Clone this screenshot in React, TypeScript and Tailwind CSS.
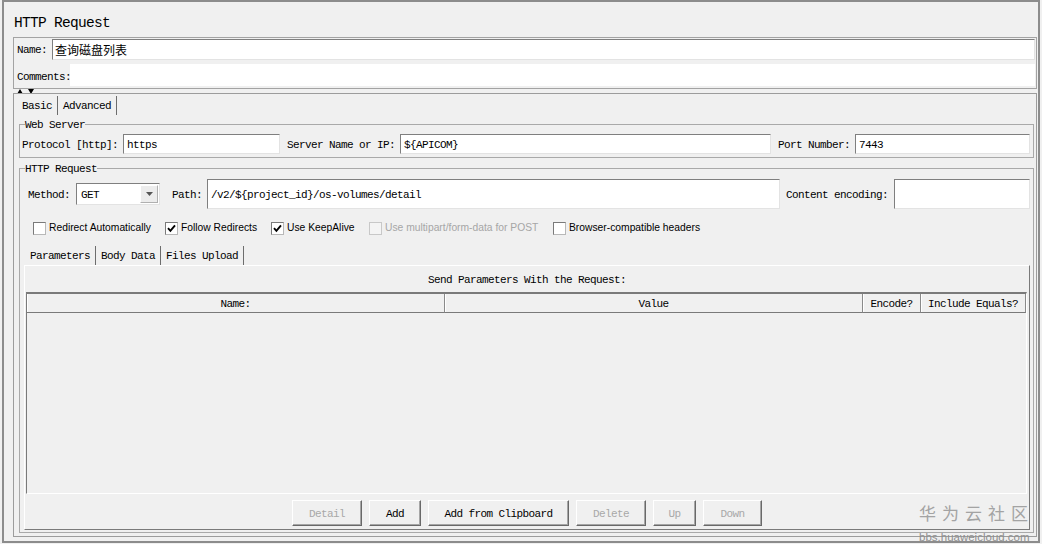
import type { ReactNode } from "react";

const mono = "font-['Liberation_Mono','Noto_Sans_CJK_SC',monospace]";
const sans = "font-['Liberation_Sans',Arial,sans-serif]";
const sunken =
  "border border-t-[#7f7f7f] border-l-[#7f7f7f] border-r-[#e3e3e3] border-b-[#e3e3e3] bg-white";

function Tab({ children, className }: { children: ReactNode; className: string }) {
  return (
    <div className={`flex h-[19px] items-center border-r border-r-[#6d6d6d] pt-[2px] ${className}`}>
      {children}
    </div>
  );
}

function Check({ checked, disabled }: { checked?: boolean; disabled?: boolean }) {
  return (
    <span
      className={
        disabled
          ? "flex h-[13px] w-[13px] shrink-0 items-center justify-center border border-[#c8c8c8] bg-[#f4f4f4]"
          : "flex h-[13px] w-[13px] shrink-0 items-center justify-center border border-t-[#7a7a7a] border-l-[#7a7a7a] border-r-[#b8b8b8] border-b-[#b8b8b8] bg-white"
      }
    >
      {checked && (
        <svg viewBox="0 0 9 9" className="h-[9px] w-[9px]">
          <path d="M1 4.2 L3.4 6.8 L8 1.4" stroke="#000" strokeWidth="1.9" fill="none" />
        </svg>
      )}
    </span>
  );
}

function Button({ label, width, disabled }: { label: string; width: string; disabled?: boolean }) {
  return (
    <div
      className={`flex h-[26px] ${width} items-center justify-center border border-t-white border-l-white border-r-[#696969] border-b-[#696969] pt-[2px] shadow-[inset_-1px_-1px_0_#a6a6a6] ${
        disabled ? "text-[#a8a8a8]" : "text-black"
      }`}
    >
      {label}
    </div>
  );
}

// label next to a field, nudged down so the glyphs sit on the field's centre line
function Label({ children, className }: { children: ReactNode; className: string }) {
  return <span className={`shrink-0 pt-[2px] ${className}`}>{children}</span>;
}

const options = [
  { label: "Redirect Automatically", checked: false, disabled: false, width: "w-[132px]" },
  { label: "Follow Redirects", checked: true, disabled: false, width: "w-[106px]" },
  { label: "Use KeepAlive", checked: true, disabled: false, width: "w-[98px]" },
  { label: "Use multipart/form-data for POST", checked: false, disabled: true, width: "w-[184px]" },
  { label: "Browser-compatible headers", checked: false, disabled: false, width: "w-[170px]" },
];

const columns = ["Name:", "Value", "Encode?", "Include Equals?"];

const buttons = [
  { label: "Detail", width: "w-[70px]", disabled: true },
  { label: "Add", width: "w-[52px]", disabled: false },
  { label: "Add from Clipboard", width: "w-[141px]", disabled: false },
  { label: "Delete", width: "w-[70px]", disabled: true },
  { label: "Up", width: "w-[43px]", disabled: true },
  { label: "Down", width: "w-[59px]", disabled: true },
];

export default function App() {
  return (
    <div
      className={`relative h-[544px] w-[1042px] overflow-hidden bg-[#f0f0f0] pl-[2px] text-black ${mono} text-[11px] tracking-[-0.6px]`}
    >
      <div className="flex h-[543px] w-[1038px] flex-col border-2 border-[#8c8c8c] pl-[9px] pr-[1px]">
        {/* sampler title */}
        <div className="h-[35px] pl-[1px] pt-[13px] text-[14.5px] leading-[16px] tracking-[-0.7px]">HTTP Request</div>

        {/* name + comments */}
        <div className="flex flex-col border border-[#a3a3a3]">
          <div className="mt-[1px] flex h-[21px] items-center pl-[3px] pr-[1px]">
            <span className="w-[35px] shrink-0 pt-[1px]">Name:</span>
            <div
              className={`flex h-full flex-1 items-center pl-[2px] font-['Noto_Sans_CJK_SC',sans-serif] text-[12px] tracking-normal ${sunken}`}
            >
              查询磁盘列表
            </div>
          </div>
          <div className="mb-[2px] mt-[4px] flex h-[22px] items-center pl-[3px] pr-[1px]">
            <span className="w-[53px] shrink-0 pt-[4px]">Comments:</span>
            <div className="h-full flex-1 bg-white" />
          </div>
        </div>

        {/* split pane arrows */}
        <div className="flex h-[4px] items-start gap-[5px] pl-[4px]">
          <svg viewBox="0 0 6 5" className="h-[5px] w-[6px]">
            <path d="M0 5 L3 0 L6 5 Z" fill="#000" />
          </svg>
          <svg viewBox="0 0 6 5" className="h-[5px] w-[6px]">
            <path d="M0 0 L6 0 L3 5 Z" fill="#000" />
          </svg>
        </div>

        {/* main tabbed pane */}
        <div className="mb-[4px] flex flex-1 flex-col border border-[#9c9c9c]">
          <div className="ml-[3px] mt-[2px] flex">
            <Tab className="px-[5px]">Basic</Tab>
            <Tab className="px-[5px]">Advanced</Tab>
          </div>

          <fieldset className="ml-[5px] mr-[2px] mt-[2px] border border-[#a9a9a9] pb-[3px] pl-[2px] pr-[3px] pt-[3px]">
            <legend className="ml-[3px] pt-[2px] leading-[12px]">Web Server</legend>
            <div className="flex h-[20px] items-center">
              <Label className="w-[101px]">Protocol [http]:</Label>
              <div className={`flex h-full w-[157px] items-center pl-[3px] pt-[2px] ${sunken}`}>https</div>
              <Label className="ml-[7px] w-[113px]">Server Name or IP:</Label>
              <div className={`flex h-full flex-1 items-center pl-[3px] pt-[2px] ${sunken}`}>{"${APICOM}"}</div>
              <Label className="ml-[7px] w-[77px]">Port Number:</Label>
              <div className={`flex h-full w-[175px] items-center pl-[3px] pt-[2px] ${sunken}`}>7443</div>
            </div>
          </fieldset>

          <fieldset className="ml-[5px] mr-[2px] mt-[3px] border border-[#a9a9a9] pb-[2px] pl-[2px] pr-[3px] pt-[4px]">
            <legend className="ml-[3px] pt-[2px] leading-[12px]">HTTP Request</legend>

            <div className="flex h-[30px] items-center pl-[6px]">
              <Label className="w-[48px]">Method:</Label>
              <div className={`flex h-[22px] w-[84px] ${sunken}`}>
                <span className="flex flex-1 items-center pl-[4px] pt-[2px]">GET</span>
                <span className="my-[1px] mr-[1px] flex w-[18px] items-center justify-center border border-t-white border-l-white border-r-[#b0b0b0] border-b-[#b0b0b0] bg-[#ececec]">
                  <svg viewBox="0 0 7 4" className="h-[4px] w-[7px]">
                    <path d="M0 0 L7 0 L3.5 4 Z" fill="#555" />
                  </svg>
                </span>
              </div>
              <Label className="ml-[12px] w-[35px]">Path:</Label>
              <div className={`flex h-full flex-1 items-center pl-[3px] pt-[2px] ${sunken}`}>
                {"/v2/${project_id}/os-volumes/detail"}
              </div>
              <Label className="ml-[6px] w-[108px]">Content encoding:</Label>
              <div className={`h-full w-[136px] ${sunken}`} />
            </div>

            <div className={`ml-[11px] mt-[11px] flex h-[16px] items-center ${sans} text-[10.3px] tracking-normal`}>
              {options.map((o) => (
                <div key={o.label} className={`flex ${o.width} shrink-0 items-center gap-[3px]`}>
                  <Check checked={o.checked} disabled={o.disabled} />
                  <span className={o.disabled ? "text-[#a6a6a6]" : "text-black"}>{o.label}</span>
                </div>
              ))}
            </div>

            <div className="ml-[2px] mt-[10px] flex">
              <Tab className="pl-[6px] pr-[5px]">Parameters</Tab>
              <Tab className="px-[5px]">Body Data</Tab>
              <Tab className="px-[5px]">Files Upload</Tab>
            </div>

            {/* parameters panel */}
            <div className="ml-[2px] flex flex-col border border-t-white border-l-white border-r-[#7a7a7a] border-b-[#7a7a7a] pb-[3px] pt-[8px]">
              <div className="text-center leading-[13px]">Send Parameters With the Request:</div>
              <div className="ml-[1px] mr-[2px] mt-[5px] border-b border-l border-r border-t-2 border-t-[#7a7a7a] border-l-[#7a7a7a] border-r-white border-b-white">
                <div className="grid grid-cols-[418px_418px_58px_1fr]">
                  {columns.map((c) => (
                    <div
                      key={c}
                      className="flex h-[19px] items-center justify-center border-b border-r border-b-[#7a7a7a] border-r-[#8a8a8a] pt-[2px] shadow-[inset_1px_0_0_#fff]"
                    >
                      {c}
                    </div>
                  ))}
                </div>
                <div className="h-[180px]" />
              </div>
              <div className="mt-[6px] flex justify-center gap-[7px]">
                {buttons.map((b) => (
                  <Button key={b.label} label={b.label} width={b.width} disabled={b.disabled} />
                ))}
              </div>
            </div>
          </fieldset>
        </div>
      </div>

      {/* community watermark */}
      <div className="absolute left-[919px] top-[502px] flex flex-col items-start tracking-normal">
        <span className="font-['Noto_Sans_CJK_SC',sans-serif] text-[17px] leading-[22px] tracking-[6px] text-[#a3a3a3]">
          华为云社区
        </span>
        <span className={`${sans} mt-[7px] text-[11.5px] leading-[13px] text-[#8e8e8e]`}>bbs.huaweicloud.com</span>
      </div>
    </div>
  );
}
